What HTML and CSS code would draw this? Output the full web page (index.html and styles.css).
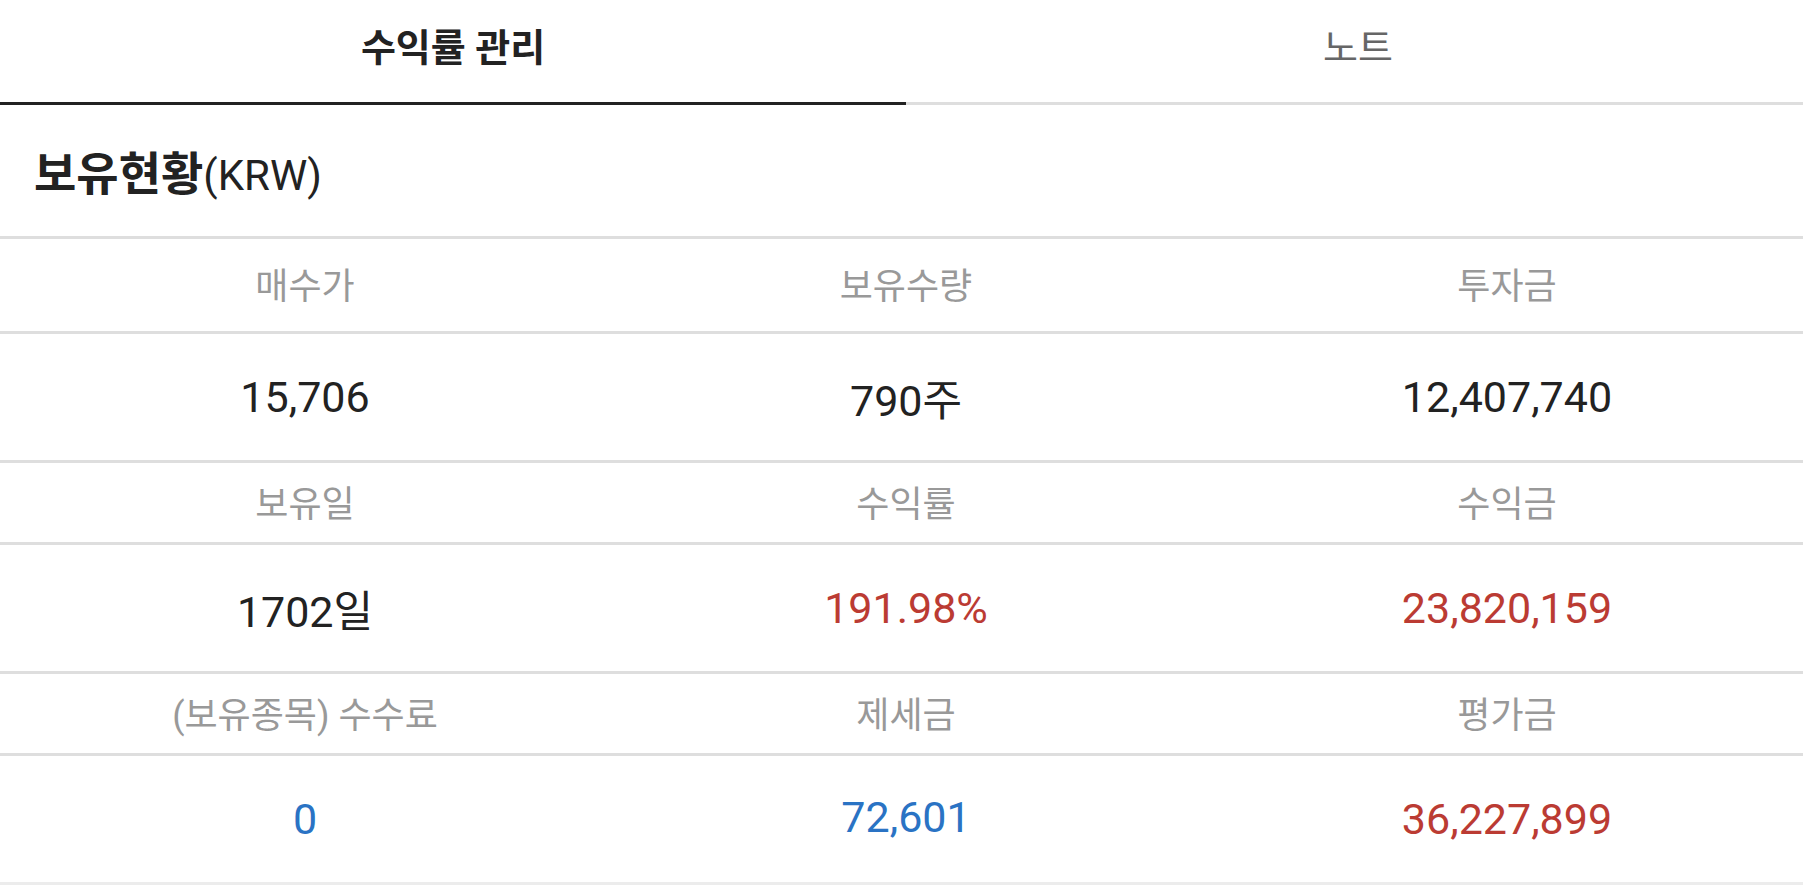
FILE: index.html
```html
<!DOCTYPE html>
<html lang="ko">
<head>
<meta charset="utf-8">
<link rel="stylesheet" href="styles.css">
</head>
<body>
<div class="page">
  <nav class="tabs">
    <div class="tab tab-active">수익률 관리</div>
    <div class="tab tab-note">노트</div>
  </nav>
  <section class="title-bar">
    <h1 class="title"><span class="title-ko">보유현황</span><span class="title-unit">(KRW)</span></h1>
  </section>
  <div class="grid">
    <div class="row label-row first">
      <div class="cell">매수가</div>
      <div class="cell">보유수량</div>
      <div class="cell">투자금</div>
    </div>
    <div class="row value-row">
      <div class="cell">15,706</div>
      <div class="cell">790주</div>
      <div class="cell">12,407,740</div>
    </div>
    <div class="row label-row">
      <div class="cell">보유일</div>
      <div class="cell">수익률</div>
      <div class="cell">수익금</div>
    </div>
    <div class="row value-row">
      <div class="cell">1702일</div>
      <div class="cell red">191.98%</div>
      <div class="cell red">23,820,159</div>
    </div>
    <div class="row label-row">
      <div class="cell">(보유종목) 수수료</div>
      <div class="cell">제세금</div>
      <div class="cell">평가금</div>
    </div>
    <div class="row value-row last">
      <div class="cell blue">0</div>
      <div class="cell blue up">72,601</div>
      <div class="cell red">36,227,899</div>
    </div>
  </div>
</div>
</body>
</html>
```

FILE: styles.css
```css
html, body {
  margin: 0;
  padding: 0;
  background: #ffffff;
}
body {
  font-family: Roboto, "Noto Sans CJK KR", sans-serif;
  color: #222222;
}
.page {
  width: 1803px;
  height: 887px;
  overflow: hidden;
}
.tabs {
  display: grid;
  grid-template-columns: 906px 1fr;
}
.tab {
  border-bottom: 3px solid #dedede;
  display: flex;
  align-items: center;
  justify-content: center;
  padding-bottom: 14px;
  height: 88px;
  font-size: 38px;
  color: #666666;
}
.tab-active {
  color: #222222;
  font-weight: 700;
  border-bottom-color: #222222;
}
.tab-note {
  padding-left: 7px;
}
.title-bar {
  height: 134px;
  box-sizing: border-box;
  border-bottom: 3px solid #dedede;
  display: flex;
  align-items: center;
  padding-left: 34px;
  padding-top: 6px;
}
.title {
  margin: 0;
  font-size: 42px;
  font-weight: 400;
  color: #222222;
  line-height: 1;
}
.title-ko {
  font-size: 46px;
  font-weight: 700;
}
.title-unit {
  font-weight: 400;
}
.row {
  display: grid;
  grid-template-columns: 1fr 1fr 1fr;
  border-bottom: 3px solid #dedede;
}
.row.last {
  border-bottom-color: #ececec;
}
.cell {
  display: flex;
  align-items: center;
  justify-content: center;
  padding-left: 9px;
}
.label-row {
  height: 75px;
  padding-bottom: 4px;
  font-size: 36px;
  color: #999999;
}
.label-row.first {
  height: 88px;
}
.value-row {
  height: 126px;
  font-size: 43px;
  color: #222222;
}
.red {
  color: #bb3b33;
}
.blue {
  color: #2a73c4;
}
.up {
  padding-bottom: 4px;
}
```
